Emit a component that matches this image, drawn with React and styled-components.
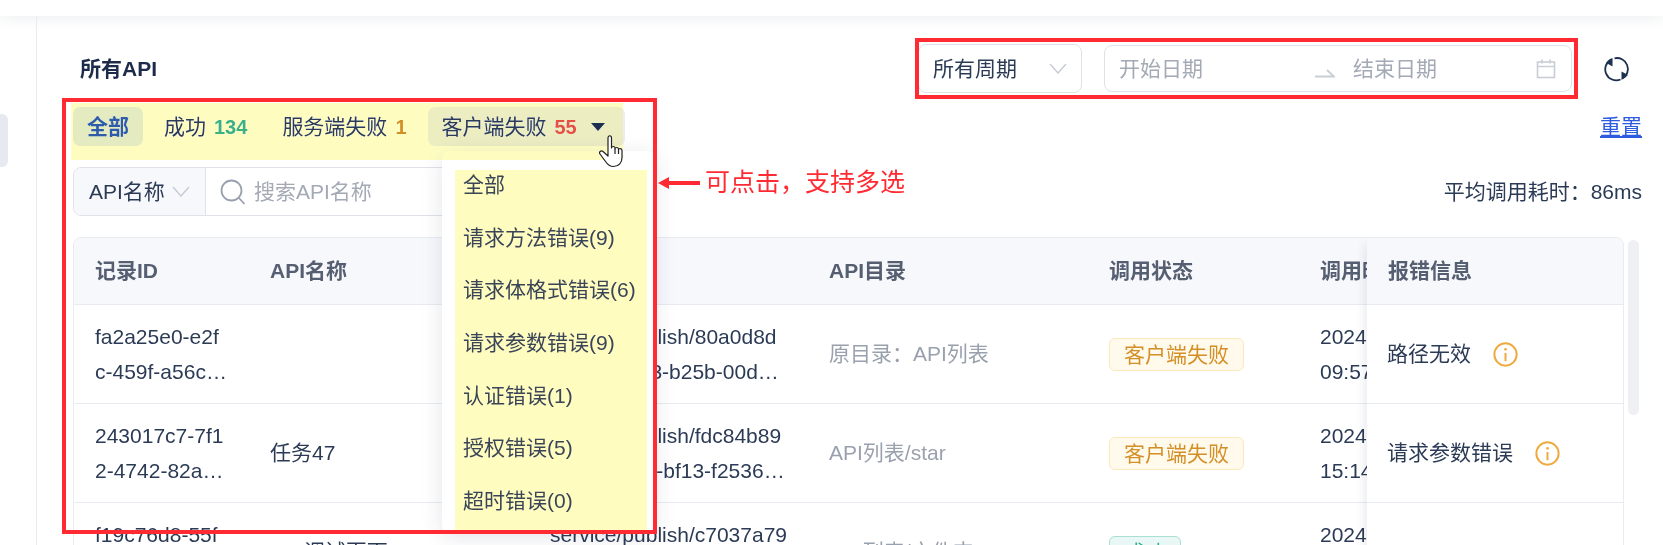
import React from 'react'
import styled, { createGlobalStyle } from 'styled-components'

const GlobalStyle = createGlobalStyle`
  html, body {
    margin: 0;
    padding: 0;
    background: #fff;
    overflow: hidden;
  }
  * {
    box-sizing: border-box;
  }
`

const Page = styled.div`
  position: relative;
  width: 1663px;
  height: 545px;
  overflow: hidden;
  display: flex;
  flex-direction: column;
  font-family: "Liberation Sans", "Noto Sans CJK SC", sans-serif;
  font-size: 21px;
  line-height: 28px;
  color: #2b3a55;
`

const TopBar = styled.div`
  flex: none;
  height: 16px;
  background: #fff;
  box-shadow: 0 3px 14px rgba(30, 40, 70, 0.07);
`

const Body = styled.div`
  flex: 1;
  display: flex;
  min-height: 0;
`

const Side = styled.div`
  flex: none;
  width: 37px;
  padding-top: 98px;
  border-right: 1px solid #e9ebf1;
`

const SideStub = styled.div`
  width: 8px;
  height: 53px;
  background: #e6e9f0;
  border-radius: 0 6px 6px 0;
`

const Main = styled.div`
  flex: 1;
  min-width: 0;
  padding: 28px 21px 0 36px;
`

const TitleRow = styled.div`
  display: flex;
  align-items: center;
  height: 49px;
`

const Title = styled.div`
  margin-left: 7px;
  font-weight: 700;
  color: #1d2b4a;
`

const Spacer = styled.div`
  flex: 1;
`

const PeriodSelect = styled.div`
  width: 164px;
  height: 49px;
  display: flex;
  align-items: center;
  justify-content: space-between;
  padding: 0 14px 0 14px;
  border: 1px solid #dfe2ea;
  border-radius: 8px;
  margin-right: 22px;
`

const DateRange = styled.div`
  width: 468px;
  height: 47px;
  display: flex;
  align-items: center;
  padding: 0 15px 0 14px;
  border: 1px solid #dfe2ea;
  border-radius: 8px;
  color: #a3a9b5;
`

const DateText = styled.span`
  width: 196px;
`

const DateArrow = styled.svg`
  width: 20px;
  height: 10px;
  margin: 8px 18px 0 0;
`

const EndDate = styled.span`
  flex: 1;
`

const RefreshIcon = styled.svg`
  width: 26px;
  height: 26px;
  margin: 0 12px 0 32px;
`

const TabRow = styled.div`
  display: flex;
  align-items: center;
  gap: 7px;
  height: 39px;
  margin-top: 14px;
`

const Tab = styled.div`
  height: 39px;
  display: flex;
  align-items: baseline;
  line-height: 39px;
  padding: ${({ $open }) => ($open ? '0 20px 0 14px' : '0 14px')};
  border-radius: 7px;
  background: ${({ $active, $open }) => ($active ? '#e4ebf5' : $open ? '#ecedf3' : 'transparent')};
  color: ${({ $active }) => ($active ? '#2f5ca8' : '#2b3a55')};
  font-weight: ${({ $active }) => ($active ? 700 : 400)};
`

const Count = styled.span`
  margin-left: 8px;
  font-weight: 700;
  font-size: 20px;
  color: ${({ $color }) => $color};
`

const Caret = styled.span`
  align-self: center;
  width: 0;
  height: 0;
  margin: 1px 0 0 14px;
  border-left: 7px solid transparent;
  border-right: 7px solid transparent;
  border-top: 8px solid #1e3050;
`

const ResetLink = styled.a`
  margin-left: auto;
  color: #2d5ce0;
  text-decoration: underline;
`

const FilterRow = styled.div`
  display: flex;
  align-items: center;
  height: 49px;
  margin-top: 21px;
`

const SearchBox = styled.div`
  width: 400px;
  height: 49px;
  display: flex;
  align-items: center;
  border: 1px solid #dfe2ea;
  border-radius: 8px;
  overflow: hidden;
`

const SearchType = styled.div`
  flex: none;
  width: 132px;
  height: 100%;
  display: flex;
  align-items: center;
  justify-content: space-between;
  padding: 0 15px 0 15px;
  background: #f7f8fc;
  border-right: 1px solid #dfe2ea;
`

const SearchGlass = styled.svg`
  flex: none;
  width: 26px;
  height: 26px;
  margin: 0 8px 0 14px;
`

const Placeholder = styled.span`
  color: #a3a9b5;
`

const Average = styled.div`
  margin-left: auto;
`

const TableRow = styled.div`
  display: flex;
  align-items: flex-start;
  gap: 4px;
  margin-top: 21px;
`

const Table = styled.div`
  width: 1551px;
  display: flex;
  border: 1px solid #e9ebf1;
  border-radius: 8px 8px 0 0;
  overflow: hidden;
`

const ScrollArea = styled.div`
  width: 1293px;
  flex: none;
  overflow: hidden;
`

const GridRow = styled.div`
  width: 1400px;
  display: grid;
  grid-template-columns: 175px 280px 279px 280px 211px 175px;
  height: ${({ $head }) => ($head ? '67px' : '99px')};
  background: ${({ $head }) => ($head ? '#f7f8fc' : '#fff')};
  border-bottom: 1px solid #e9ebf1;
`

const HeadCell = styled.div`
  display: flex;
  align-items: center;
  padding-left: 21px;
  font-weight: 700;
  color: #565f72;
  white-space: nowrap;
`

const Cell = styled.div`
  display: flex;
  flex-direction: column;
  justify-content: center;
  padding-left: 21px;
  line-height: 35.5px;
  white-space: nowrap;
  color: ${({ $muted }) => ($muted ? '#9aa1ae' : '#2b3a55')};
`

const Tag = styled.span`
  align-self: flex-start;
  height: 33px;
  display: flex;
  align-items: center;
  padding: 0 14px;
  border-radius: 6px;
  line-height: 1;
  border: 1px solid ${({ $ok }) => ($ok ? '#a9e0d3' : '#fbe8bc')};
  background: ${({ $ok }) => ($ok ? '#e9f8f4' : '#fffaeb')};
  color: ${({ $ok }) => ($ok ? '#34b08e' : '#d49028')};
`

const FixedColumn = styled.div`
  flex: 1;
  min-width: 0;
  box-shadow: -8px 0 10px -6px rgba(30, 40, 70, 0.1);
  position: relative;
`

const FixedCell = styled.div`
  height: ${({ $head }) => ($head ? '67px' : '99px')};
  display: flex;
  align-items: center;
  gap: 22px;
  padding-left: ${({ $head }) => ($head ? '21px' : '20px')};
  background: ${({ $head }) => ($head ? '#f7f8fc' : '#fff')};
  color: ${({ $head }) => ($head ? '#565f72' : '#2b3a55')};
  font-weight: ${({ $head }) => ($head ? 700 : 400)};
  border-bottom: 1px solid #e9ebf1;
`

const ScrollThumb = styled.div`
  flex: none;
  width: 11px;
  height: 175px;
  margin-top: 3px;
  background: #eef0f4;
  border-radius: 6px;
`

/* annotation layers drawn over the page */
const RedBox = styled.div`
  position: absolute;
  left: ${({ $x }) => $x}px;
  top: ${({ $y }) => $y}px;
  width: ${({ $w }) => $w}px;
  height: ${({ $h }) => $h}px;
  border: 4px solid #ff2a32;
  z-index: 5;
  pointer-events: none;
`

const Highlight = styled.div`
  position: absolute;
  left: 71px;
  top: 103px;
  width: 552px;
  height: 57px;
  background: #fffcc0;
  mix-blend-mode: darken;
  z-index: 4;
`

const Dropdown = styled.div`
  position: absolute;
  left: 442px;
  top: 151px;
  width: 213px;
  height: 382px;
  padding: 19px 8px 0 13px;
  background: #fff;
  border-radius: 8px;
  box-shadow: 0 4px 22px rgba(30, 40, 70, 0.12);
  z-index: 3;
`

const OptionList = styled.div`
  height: 100%;
  overflow: hidden;
  background: #fffcc0;
`

const Options = styled.div`
  margin-top: -11px;
`

const Option = styled.div`
  height: 52.7px;
  line-height: 52.7px;
  padding-left: 8px;
  white-space: nowrap;
  color: #3a4558;
`

const Cursor = styled.svg`
  position: absolute;
  left: 599px;
  top: 135px;
  width: 26px;
  height: 33px;
  z-index: 6;
`

const Note = styled.div`
  position: absolute;
  left: 658px;
  top: 165px;
  display: flex;
  align-items: center;
  gap: 5px;
  color: #ff2a32;
  font-size: 25px;
  line-height: 35px;
  white-space: nowrap;
  z-index: 6;
`

const Chevron = ({ color = '#c3c8d2' }) => (
  <svg width="18" height="11" viewBox="0 0 18 11" fill="none">
    <path d="M1 1l8 9 8-9" stroke={color} strokeWidth="1.2" />
  </svg>
)

const CalendarIcon = () => (
  <svg width="20" height="20" viewBox="0 0 20 20" fill="none" stroke="#c9cdd6" strokeWidth="1.6">
    <rect x="1.5" y="3" width="17" height="15.5" />
    <path d="M1.5 7.5h17M6 0.5v4M14 0.5v4" />
  </svg>
)

const InfoIcon = () => (
  <svg width="25" height="25" viewBox="0 0 24 24" fill="none" stroke="#f0a93c" strokeWidth="1.9">
    <circle cx="12" cy="12" r="10.700" />
    <circle cx="12" cy="7" r="1.300" fill="#f0a93c" stroke="none" />
    <path d="M12 10.500v8" />
  </svg>
)

const rows = [
  {
    id: ['fa2a25e0-e2f', 'c-459f-a56c…'],
    name: '',
    path: ['service/publish/80a0d8d', 'b-4c13-45f3-b25b-00d…'],
    dir: '原目录：API列表',
    status: '客户端失败',
    time: ['2024-06-18', '09:57:12'],
    error: '路径无效',
  },
  {
    id: ['243017c7-7f1', '2-4742-82a…'],
    name: '任务47',
    path: ['service/publish/fdc84b89', '-2a41-4c7e-bf13-f2536…'],
    dir: 'API列表/star',
    status: '客户端失败',
    time: ['2024-06-18', '15:14:36'],
    error: '请求参数错误',
  },
  {
    id: ['f19c76d8-55f', 'a-4e02-91b7…'],
    name: 'API调试页面',
    path: ['service/publish/c7037a79', '-6d12-4b0a-a2c4-1e8f…'],
    dir: 'API列表/文件夹',
    status: '成功',
    time: ['2024-06-18', '16:20:05'],
    error: '',
  },
]

const options = ['全部', '请求方法错误(9)', '请求体格式错误(6)', '请求参数错误(9)', '认证错误(1)', '授权错误(5)', '超时错误(0)']

function App() {
  return (
    <Page>
      <GlobalStyle />
      <TopBar />
      <Body>
        <Side>
          <SideStub />
        </Side>
        <Main>
          <TitleRow>
            <Title>所有API</Title>
            <Spacer />
            <PeriodSelect>
              所有周期
              <Chevron />
            </PeriodSelect>
            <DateRange>
              <DateText>开始日期</DateText>
              <DateArrow viewBox="0 0 20 10" fill="none">
                <path d="M0 8.5h19L12 2" stroke="#c9cdd6" strokeWidth="1.8" />
              </DateArrow>
              <EndDate>结束日期</EndDate>
              <CalendarIcon />
            </DateRange>
            <RefreshIcon viewBox="0 0 26 26" fill="none">
              <path d="M10.500 2.300A11 11 0 0 1 18.500 22.500" stroke="#1e3050" strokeWidth="1.800" />
              <path d="M16.500 23.500A11 11 0 0 1 8 3.200" stroke="#1e3050" strokeWidth="1.800" />
              <path d="M8.500 2v8.500L2.500 7zM17.500 24v-8.500L24 19z" fill="#1e3050" />
            </RefreshIcon>
          </TitleRow>

          <TabRow>
            <Tab $active>全部</Tab>
            <Tab>
              成功<Count $color="#3caf83">134</Count>
            </Tab>
            <Tab>
              服务端失败<Count $color="#d39022">1</Count>
            </Tab>
            <Tab $open>
              客户端失败<Count $color="#e5503f">55</Count>
              <Caret />
            </Tab>
            <ResetLink>重置</ResetLink>
          </TabRow>

          <FilterRow>
            <SearchBox>
              <SearchType>
                API名称
                <Chevron />
              </SearchType>
              <SearchGlass viewBox="0 0 26 26" fill="none" stroke="#9aa1ae" strokeWidth="1.8">
                <circle cx="11.500" cy="11.500" r="10" />
                <path d="M18.500 18.500l6 6.500" />
              </SearchGlass>
              <Placeholder>搜索API名称</Placeholder>
            </SearchBox>
            <Average>平均调用耗时：86ms</Average>
          </FilterRow>

          <TableRow>
            <Table>
              <ScrollArea>
                <GridRow $head>
                  <HeadCell>记录ID</HeadCell>
                  <HeadCell>API名称</HeadCell>
                  <HeadCell>API路径</HeadCell>
                  <HeadCell>API目录</HeadCell>
                  <HeadCell>调用状态</HeadCell>
                  <HeadCell>调用时间</HeadCell>
                </GridRow>
                {rows.map((row) => (
                  <GridRow key={row.id[0]}>
                    <Cell>
                      <span>{row.id[0]}</span>
                      <span>{row.id[1]}</span>
                    </Cell>
                    <Cell>{row.name}</Cell>
                    <Cell>
                      <span>{row.path[0]}</span>
                      <span>{row.path[1]}</span>
                    </Cell>
                    <Cell $muted>{row.dir}</Cell>
                    <Cell>
                      <Tag $ok={row.status === '成功'}>{row.status}</Tag>
                    </Cell>
                    <Cell>
                      <span>{row.time[0]}</span>
                      <span>{row.time[1]}</span>
                    </Cell>
                  </GridRow>
                ))}
              </ScrollArea>
              <FixedColumn>
                <FixedCell $head>报错信息</FixedCell>
                {rows.map((row) => (
                  <FixedCell key={row.id[0]}>
                    {row.error}
                    {row.error && <InfoIcon />}
                  </FixedCell>
                ))}
              </FixedColumn>
            </Table>
            <ScrollThumb />
          </TableRow>
        </Main>
      </Body>

      <Dropdown>
        <OptionList>
          <Options>
            {options.map((option) => (
              <Option key={option}>{option}</Option>
            ))}
          </Options>
        </OptionList>
      </Dropdown>
      <Highlight />
      <Cursor viewBox="0 0 26 33" fill="#fff" stroke="#222" strokeWidth="1.2" strokeLinejoin="round">
        <path d="M9 3c0-3 3.500-3 3.500 0v10c0-2 3.500-2 3.500 0v1c0-2 3.500-2 3.500 0v1c0-2 3.500-2 3.500 .5v7c0 5-3 9-8.500 9-4 0-6-2-8-5L1 19c-1.500-2 1-4 3-2.500l5 4.500z" />
        <path d="M16 14v5M19.500 15v4" fill="none" />
      </Cursor>
      <Note>
        <svg width="42" height="14" viewBox="0 0 42 14">
          <path d="M0 7l11-6v4h31v4H11v4z" fill="#ff2a32" />
        </svg>
        可点击，支持多选
      </Note>
      <RedBox $x={62} $y={98} $w={595} $h={436} />
      <RedBox $x={915} $y={38} $w={663} $h={61} />
    </Page>
  )
}

export default App
